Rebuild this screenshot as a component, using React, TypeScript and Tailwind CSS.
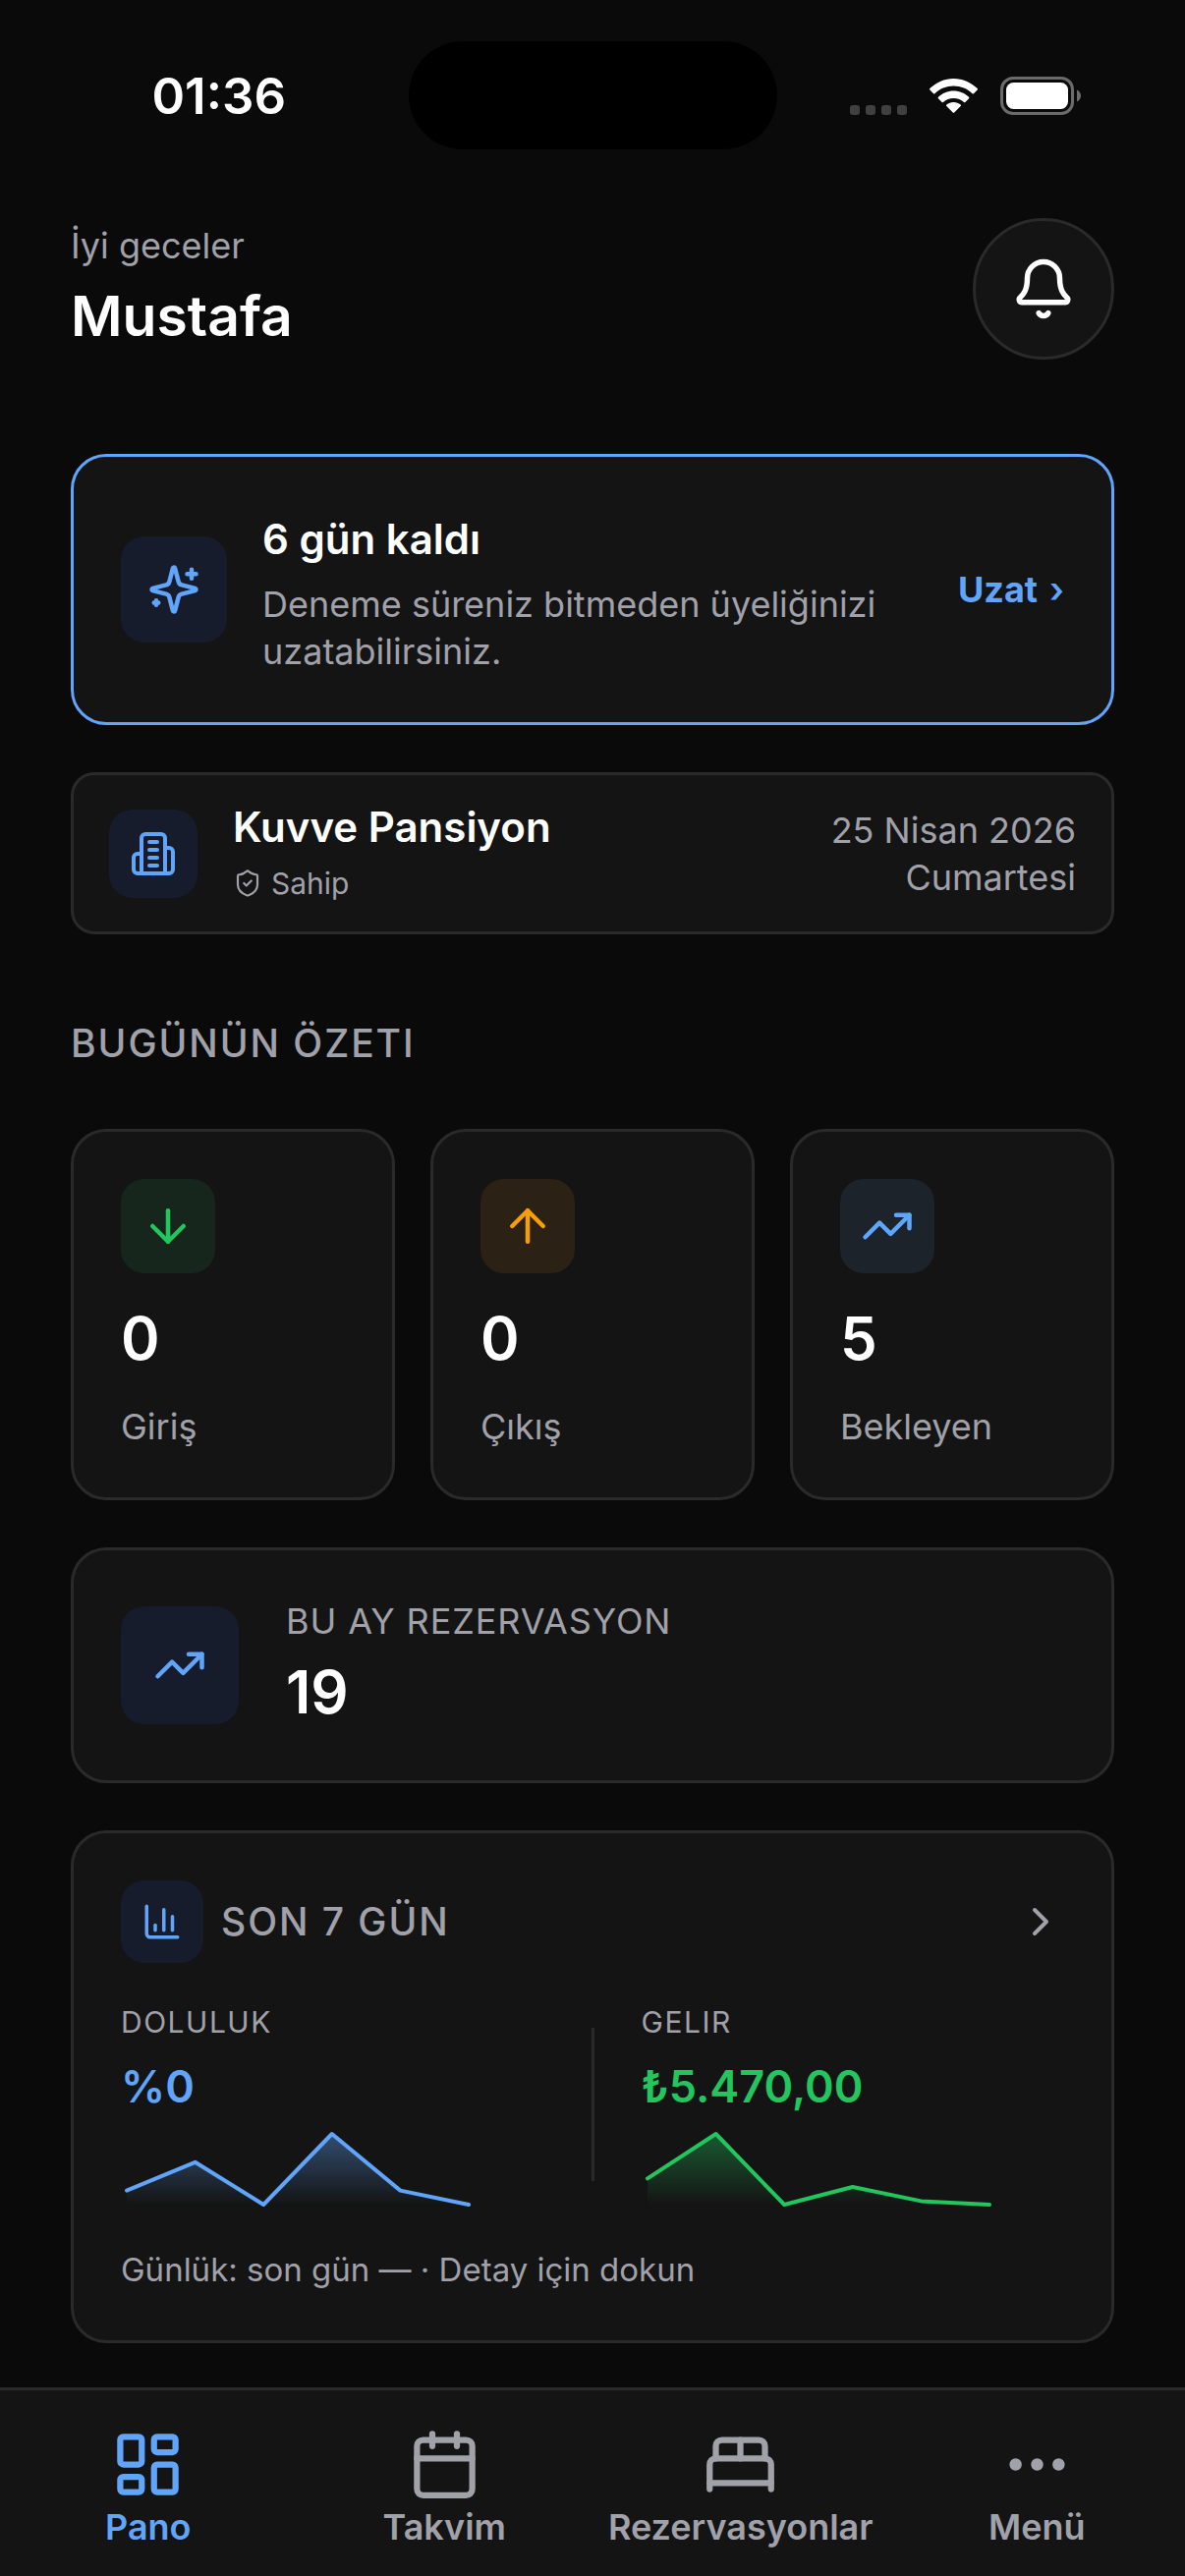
import type { ReactNode } from "react";
import {
  ArrowDown,
  ArrowUp,
  BedDouble,
  Bell,
  Calendar,
  ChartColumn,
  ChevronRight,
  Ellipsis,
  LayoutDashboard,
  ShieldCheck,
  TrendingUp,
} from "lucide-react";

const stats = [
  {
    label: "Giriş",
    value: 0,
    icon: ArrowDown,
    tone: "bg-[#16261c] text-[#22c55e]",
  },
  {
    label: "Çıkış",
    value: 0,
    icon: ArrowUp,
    tone: "bg-[#2b2114] text-[#f59e0b]",
  },
  {
    label: "Bekleyen",
    value: 5,
    icon: TrendingUp,
    tone: "bg-[#1c232b] text-[#60a5fa]",
  },
];

const tabs = [
  { label: "Pano", icon: LayoutDashboard, active: true },
  { label: "Takvim", icon: Calendar, active: false },
  { label: "Rezervasyonlar", icon: BedDouble, active: false },
  { label: "Menü", icon: Ellipsis, active: false },
];

// daily values, normalised to 0..1
const occupancy = [0.2, 0.6, 0, 1, 0.2, 0];
const income = [0.37, 1, 0, 0.25, 0.05, 0];

function SparklesIcon() {
  return (
    <svg
      viewBox="0 0 24 24"
      className="size-[54px]"
      fill="none"
      stroke="currentColor"
      strokeWidth="2"
      strokeLinecap="round"
      strokeLinejoin="round"
      aria-hidden="true"
    >
      <path d="M9.937 15.5A2 2 0 0 0 8.5 14.063l-6.135-1.582a.5.5 0 0 1 0-.962L8.5 9.936A2 2 0 0 0 9.937 8.5l1.582-6.135a.5.5 0 0 1 .963 0L14.063 8.5A2 2 0 0 0 15.5 9.937l6.135 1.581a.5.5 0 0 1 0 .964L15.5 14.063a2 2 0 0 0-1.437 1.437l-1.582 6.135a.5.5 0 0 1-.963 0z" />
      <path d="M20 3v4M22 5h-4M4 17v2M5 18H3" />
    </svg>
  );
}

function BuildingIcon() {
  return (
    <svg
      viewBox="0 0 24 24"
      className="size-12"
      fill="none"
      stroke="currentColor"
      strokeWidth="2"
      strokeLinecap="round"
      strokeLinejoin="round"
      aria-hidden="true"
    >
      <path d="M6 22V4a2 2 0 0 1 2-2h8a2 2 0 0 1 2 2v18Z" />
      <path d="M6 12H4a2 2 0 0 0-2 2v6a2 2 0 0 0 2 2h2" />
      <path d="M18 9h2a2 2 0 0 1 2 2v9a2 2 0 0 1-2 2h-2" />
      <path d="M10 6h4M10 10h4M10 14h4M10 18h4" />
    </svg>
  );
}

function StatusBar() {
  return (
    <div className="grid h-[186px] grid-cols-[1fr_375px_1fr] items-start pt-[42px]">
      <div className="flex h-[110px] items-center justify-center pl-[30px] text-[51px] leading-none font-semibold">
        01:36
      </div>
      <div className="h-[110px] rounded-full bg-black" />
      <div className="flex h-[110px] items-center pl-[74px]">
        <div className="flex items-end gap-[22px]">
          <div className="flex gap-[6px]">
            <span className="size-[10px] rounded-[3px] bg-[#404040]" />
            <span className="size-[10px] rounded-[3px] bg-[#404040]" />
            <span className="size-[10px] rounded-[3px] bg-[#404040]" />
            <span className="size-[10px] rounded-[3px] bg-[#404040]" />
          </div>
          <svg viewBox="0 0 51 37" className="h-[37px] w-[51px]" fill="white">
            <path d="M25.5 7.6c7.4 0 14.1 2.8 19.1 7.6.4.4 1 .4 1.4 0l3.7-3.7c.4-.4.4-1 0-1.4C43.3 3.9 34.8 0 25.5 0S7.7 3.9 1.3 10.1c-.4.4-.4 1 0 1.4l3.7 3.7c.4.4 1 .4 1.4 0C11.4 10.4 18.1 7.6 25.5 7.6z" />
            <path d="M25.5 19.9c4 0 7.7 1.5 10.500 4.100.4.4 1 .4 1.4 0l3.700-3.700c.4-.4.4-1.100 0-1.500-4.100-3.900-9.600-6.300-15.600-6.300S14 14.900 9.900 18.800c-.4.4-.4 1.100 0 1.500l3.700 3.700c.4.4 1 .4 1.4 0 2.800-2.600 6.500-4.100 10.500-4.100z" />
            <path d="M32.7 28.1c.4-.4.4-1.1-.1-1.5-1.9-1.6-4.400-2.600-7.100-2.600s-5.200 1-7.100 2.600c-.5.4-.5 1.1-.1 1.500l6.400 6.500c.4.4 1.1.4 1.500 0z" />
          </svg>
          <svg viewBox="0 0 82 39" className="h-[39px] w-[82px]">
            <rect
              x="1.5"
              y="1.5"
              width="72"
              height="36"
              rx="11.5"
              fill="none"
              stroke="#6b6b6b"
              strokeWidth="3"
            />
            <rect x="6" y="6" width="63" height="27" rx="7.5" fill="white" />
            <path d="M78 13.5c2.500 1 4 3.400 4 6s-1.500 5-4 6z" fill="#6b6b6b" />
          </svg>
        </div>
      </div>
    </div>
  );
}

function Card({
  children,
  className = "border-[#2a2a2a]",
}: {
  children: ReactNode;
  className?: string;
}) {
  return (
    <section
      className={`rounded-[36px] border-[3px] bg-[#141414] p-12 ${className}`}
    >
      {children}
    </section>
  );
}

function Sparkline({ id, values }: { id: string; values: number[] }) {
  const points = values.map((v, i) => [
    6 + (i * 348) / (values.length - 1),
    78 - v * 72,
  ]);
  const line = points.map((p) => p.join(",")).join(" ");

  return (
    <svg
      viewBox="0 0 360 84"
      className="mt-3 h-[84px] w-[360px]"
      fill="none"
      aria-hidden="true"
    >
      <defs>
        <linearGradient
          id={id}
          gradientUnits="userSpaceOnUse"
          x1="0"
          y1="6"
          x2="0"
          y2="78"
        >
          <stop offset="0" stopColor="currentColor" stopOpacity="0.4" />
          <stop offset="1" stopColor="currentColor" stopOpacity="0" />
        </linearGradient>
      </defs>
      <polygon points={`6,78 ${line} 354,78`} fill={`url(#${id})`} />
      <polyline
        points={line}
        stroke="currentColor"
        strokeWidth="4"
        strokeLinecap="round"
        strokeLinejoin="round"
      />
    </svg>
  );
}

function Metric({
  id,
  label,
  value,
  values,
  tone,
}: {
  id: string;
  label: string;
  value: string;
  values: number[];
  tone: string;
}) {
  return (
    <div className={`min-w-0 flex-1 ${tone}`}>
      <p className="text-[30px] leading-[48px] tracking-wider text-[#a1a1aa]">
        {label}
      </p>
      <p className="mt-3 text-[45px] leading-[60px] font-semibold">{value}</p>
      <Sparkline id={id} values={values} />
    </div>
  );
}

export default function App() {
  return (
    <div className="flex min-h-screen flex-col bg-[#0a0a0a] font-['Inter',sans-serif] text-white">
      <StatusBar />

      <main className="flex-1 px-[72px] pt-9 pb-[45px]">
        <header className="flex items-center justify-between">
          <div className="pb-1">
            <p className="text-[36px] leading-[48px] text-[#a1a1aa]">
              İyi geceler
            </p>
            <h1 className="mt-3 text-[57px] leading-[72px] font-semibold">
              Mustafa
            </h1>
          </div>
          <button
            type="button"
            aria-label="Bildirimler"
            className="flex size-36 items-center justify-center rounded-full border-[3px] border-[#2a2a2a] bg-[#141414]"
          >
            <Bell className="size-[66px]" strokeWidth={2} />
          </button>
        </header>

        <div className="mt-24 flex flex-col gap-12">
          <Card className="border-[#60a5fa]">
            <div className="flex items-center gap-9">
              <div className="flex size-27 shrink-0 items-center justify-center rounded-3xl bg-[#161c2c] text-[#60a5fa]">
                <SparklesIcon />
              </div>
              <div className="min-w-0 flex-1">
                <h2 className="text-[42px] leading-[72px] font-semibold">
                  6 gün kaldı
                </h2>
                <p className="mt-1.5 text-[36px] leading-[48px] text-[#a1a1aa]">
                  Deneme süreniz bitmeden üyeliğinizi uzatabilirsiniz.
                </p>
              </div>
              <button
                type="button"
                className="flex shrink-0 gap-3 text-[36px] leading-[48px] font-bold text-[#60a5fa]"
              >
                Uzat <span className="font-semibold">›</span>
              </button>
            </div>
          </Card>

          <section className="flex items-center gap-9 rounded-3xl border-[3px] border-[#2a2a2a] bg-[#141414] px-9 py-[30px]">
            <div className="flex size-[90px] shrink-0 items-center justify-center rounded-3xl bg-[#161c2c] text-[#60a5fa]">
              <BuildingIcon />
            </div>
            <div className="min-w-0 flex-1">
              <h2 className="text-[42px] leading-[46px] font-semibold">
                Kuvve Pansiyon
              </h2>
              <div className="mt-[15px] flex items-center gap-[9px] text-[30px] leading-[38px] text-[#a1a1aa]">
                <ShieldCheck className="size-[30px]" strokeWidth={1.75} />
                Sahip
              </div>
            </div>
            <div className="text-right text-[36px] leading-[48px] text-[#a1a1aa]">
              <p>25 Nisan 2026</p>
              <p>Cumartesi</p>
            </div>
          </section>
        </div>

        <h2 className="mt-[84px] text-[39px] leading-[54px] font-medium tracking-wider text-[#a1a1aa]">
          BUGÜNÜN ÖZETI
        </h2>

        <div className="mt-[60px] flex flex-col gap-12">
          <div className="grid grid-cols-3 gap-9">
            {stats.map(({ label, value, icon: Icon, tone }) => (
              <Card key={label}>
                <div
                  className={`flex size-24 items-center justify-center rounded-3xl ${tone}`}
                >
                  <Icon className="size-[54px]" strokeWidth={2} />
                </div>
                <p className="mt-[30px] text-[60px] leading-[72px] font-semibold">
                  {value}
                </p>
                <p className="mt-[30px] text-[36px] leading-[48px] text-[#a1a1aa]">
                  {label}
                </p>
              </Card>
            ))}
          </div>

          <Card>
            <div className="flex items-center gap-12">
              <div className="flex size-30 items-center justify-center rounded-3xl bg-[#161c2c] text-[#60a5fa]">
                <TrendingUp className="size-[54px]" strokeWidth={2} />
              </div>
              <div>
                <p className="text-[36px] leading-[48px] tracking-wide text-[#a1a1aa]">
                  BU AY REZERVASYON
                </p>
                <p className="mt-3 pb-1.5 text-[60px] leading-[72px] font-semibold">
                  19
                </p>
              </div>
            </div>
          </Card>

          <Card>
            <div className="flex items-center">
              <div className="flex size-21 items-center justify-center rounded-3xl bg-[#161c2c] text-[#60a5fa]">
                <ChartColumn className="size-[42px]" strokeWidth={2} />
              </div>
              <h2 className="ml-[18px] flex-1 text-[39px] leading-[54px] font-medium tracking-wider text-[#a1a1aa]">
                SON 7 GÜN
              </h2>
              <button
                type="button"
                aria-label="Detay"
                className="text-[#a1a1aa]"
              >
                <ChevronRight className="size-12" strokeWidth={2} />
              </button>
            </div>
            <div className="mt-9 flex gap-12">
              <Metric
                id="occupancy-fill"
                label="DOLULUK"
                value="%0"
                values={occupancy}
                tone="text-[#60a5fa]"
              />
              <div className="my-[30px] w-[3px] bg-[#2a2a2a]" />
              <Metric
                id="income-fill"
                label="GELIR"
                value="₺5.470,00"
                values={income}
                tone="text-[#22c55e]"
              />
            </div>
            <p className="mt-9 text-[33px] leading-[48px] text-[#a1a1aa]">
              Günlük: son gün — · Detay için dokun
            </p>
          </Card>
        </div>
      </main>

      <nav className="grid grid-cols-4 border-t-[3px] border-[#2a2a2a] bg-[#141414] pt-[38px] pb-[29px]">
        {tabs.map(({ label, icon: Icon, active }) => (
          <button
            key={label}
            type="button"
            aria-current={active ? "page" : undefined}
            className={`flex flex-col items-center gap-[5px] ${
              active ? "text-[#60a5fa]" : "text-[#a1a1aa]"
            }`}
          >
            <Icon className="size-[75px]" strokeWidth={2} />
            <span className="text-[36px] leading-[42px] font-semibold">
              {label}
            </span>
          </button>
        ))}
      </nav>
    </div>
  );
}
